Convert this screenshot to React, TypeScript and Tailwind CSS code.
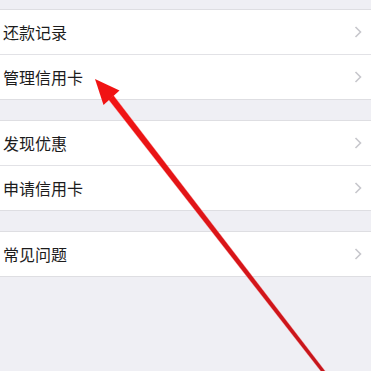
import { Fragment } from "react";

const groups = [
  ["还款记录", "管理信用卡"],
  ["发现优惠", "申请信用卡"],
  ["常见问题"],
];

const Chevron = () => (
  <svg width="8" height="12" viewBox="0 0 8 12" className="mr-[9px]">
    <path d="M1.5 1 L6.5 6 L1.5 11" fill="none" stroke="#c7c7cc" strokeWidth="1.6" />
  </svg>
);

const App = () => {
  return (
    <div
      className="relative w-[371px] h-[371px] overflow-hidden bg-[#efeff4] pt-[9px]"
      style={{ fontFamily: '"Noto Sans CJK SC", "Noto Sans", sans-serif' }}
    >
      <div className="flex flex-col gap-[20px]">
        {groups.map((rows, gi) => (
          <div key={gi} className="bg-white border-y border-[#dedee2]">
            {rows.map((label, ri) => (
              <Fragment key={label}>
                {ri > 0 && <div className="h-px bg-[#e2e2e6]" />}
                <div className="h-[44px] flex items-center justify-between pl-[3px]">
                  <span className="text-[16px] leading-none text-[#1c1c1c]">{label}</span>
                  <Chevron />
                </div>
              </Fragment>
            ))}
          </div>
        ))}
      </div>

      {/* red annotation arrow */}
      <svg
        className="absolute inset-0 pointer-events-none"
        width="371"
        height="371"
        viewBox="0 0 371 371"
      >
        <defs>
          <linearGradient id="shaft" x1="111" y1="97" x2="324" y2="372" gradientUnits="userSpaceOnUse">
            <stop offset="0" stopColor="#f21414" />
            <stop offset="1" stopColor="#c4161c" />
          </linearGradient>
        </defs>
        <polygon points="113.6,95.5 108.4,99.5 322.6,373.5 325.4,371.3" fill="url(#shaft)" stroke="#ff9a9a" strokeOpacity="0.35" strokeWidth="1" />
        <polygon points="95,79 103.5,105 119.5,90.5" fill="#f01313" />
      </svg>
    </div>
  );
};

export default App;
